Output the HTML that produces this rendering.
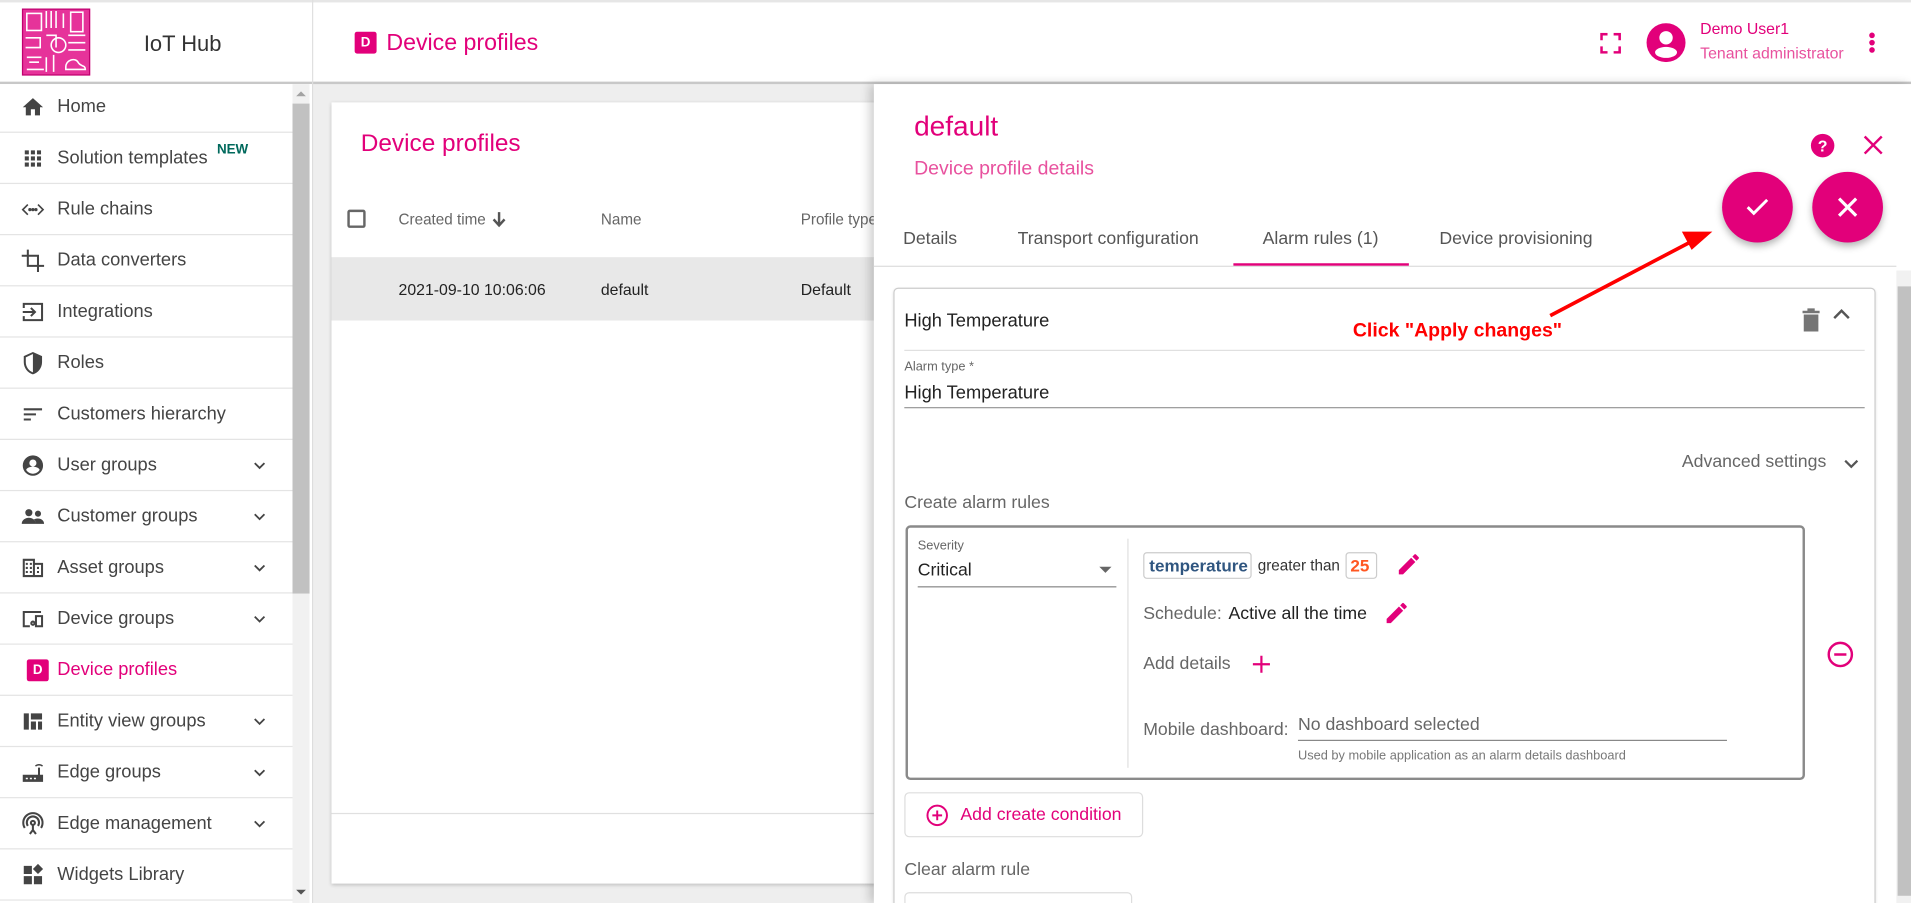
<!DOCTYPE html>
<html><head><meta charset="utf-8">
<style>
*{box-sizing:border-box;margin:0;padding:0}
html,body{width:1911px;height:903px;overflow:hidden;background:#fff;font-family:"Liberation Sans",Arial,sans-serif}
#w{width:1568px;height:741px;position:relative;transform:scale(1.21875);transform-origin:0 0;overflow:hidden}
.a{position:absolute}
.pk{color:#e2007a}
.side{left:0;top:67px;width:240px}
.it{position:relative;height:42px;border-bottom:1px solid #e4e4e4;display:flex;align-items:center;padding-left:47px;font-size:15px;color:#444}
.it svg{position:absolute;left:17px;top:11px;width:20px;height:20px;fill:#444}
.it svg.s{fill:none}
.it .ch{position:absolute;left:204px;top:12px;width:18px;height:18px;fill:#444}
.t{position:absolute;white-space:nowrap}
</style></head><body><div id="w">
<div class="a" style="left:0;top:0;width:1568px;height:2px;background:#e6e6e6"></div>
<div class="a" style="left:18px;top:7px;width:56px;height:55px;background:#e6339a;border:1px solid #c00070"></div>
<svg class="a" style="left:18px;top:7px" width="56" height="55" viewBox="0 0 56 55" fill="none" stroke="#fff" stroke-width="1.3"><rect x="4" y="4" width="12" height="14"/><path d="M20 2v14M24 2v14M28 2v14M34 4v12"/><rect x="40" y="3" width="10" height="16"/><path d="M3 24h12v8H3M20 22h8v10"/><circle cx="30" cy="30" r="6"/><path d="M38 22h14M38 28h14M38 34h14M4 40h12M6 44h8M20 40v12M26 38v14M4 50h14"/><path d="M36 48c0-6 8-8 10-4s6 2 6 6H36z"/></svg>
<div class="t" style="left:118px;top:26px;font-size:18px;color:#333">IoT Hub</div>
<div class="a" style="left:256px;top:0;width:1px;height:67px;background:#e0e0e0"></div>
<div class="a" style="left:291px;top:26px;width:18px;height:18px;background:#e2007a;border-radius:2px;color:#fff;font-size:11px;font-weight:bold;text-align:center;line-height:18px">D</div>
<div class="t pk" style="left:317px;top:25px;font-size:19px">Device profiles</div>
<svg class="a" style="left:1313px;top:27px" width="17" height="17" viewBox="0 0 17 17" fill="none" stroke="#e2007a" stroke-width="2.2"><path d="M1 6V1h5M11 1h5v5M16 11v5h-5M6 16H1v-5"/></svg>
<svg class="a" style="left:1351px;top:19px" width="32" height="32" viewBox="0 0 32 32"><circle cx="16" cy="16" r="16" fill="#e2007a"/><circle cx="16" cy="12" r="5.5" fill="#fff"/><ellipse cx="16" cy="24" rx="9" ry="4.5" fill="#fff"/></svg>
<div class="t pk" style="left:1395px;top:16px;font-size:13px">Demo User1</div>
<div class="t pk" style="left:1395px;top:36px;font-size:13px;color:#e8519e">Tenant administrator</div>
<svg class="a" style="left:1532px;top:25px" width="8" height="20"><circle cx="4" cy="4" r="2.3" fill="#e2007a"/><circle cx="4" cy="10" r="2.3" fill="#e2007a"/><circle cx="4" cy="16" r="2.3" fill="#e2007a"/></svg>
<div class="a" style="left:257px;top:67px;width:1311px;height:674px;background:#eee"></div>
<div class="a" style="left:0;top:67px;width:1568px;height:2px;background:#c8c8c8"></div>
<div class="a" style="left:0;top:69px;width:256px;height:672px;background:#fff"></div>
<div class="a" style="left:256px;top:67px;width:1px;height:674px;background:#ddd"></div>
<div class="a" style="left:240px;top:69px;width:14px;height:672px;background:#f1f1f1"></div>
<div class="a" style="left:240px;top:85px;width:14px;height:402px;background:#c1c1c1"></div>
<div class="a" style="left:243px;top:75px;width:0;height:0;border:4px solid transparent;border-bottom-color:#a3a3a3;border-top:0"></div>
<div class="a" style="left:243px;top:730px;width:0;height:0;border:4px solid transparent;border-top-color:#555;border-bottom:0"></div>
<div class="a side">
<div class="it"><svg viewBox="0 0 24 24"><path d="M10 20v-6h4v6h5v-8h3L12 3 2 12h3v8z"/></svg>Home</div>
<div class="it"><svg viewBox="0 0 24 24"><path d="M4 4h4v4H4zM10 4h4v4h-4zM16 4h4v4h-4zM4 10h4v4H4zM10 10h4v4h-4zM16 10h4v4h-4zM4 16h4v4H4zM10 16h4v4h-4zM16 16h4v4h-4z"/></svg>Solution templates<span style="position:absolute;left:178px;top:8px;font-size:11px;color:#00695c;font-weight:bold">NEW</span></div>
<div class="it"><svg class="s" viewBox="0 0 24 24" stroke="#444" stroke-width="1.6"><path d="M7 7l-5 5 5 5M17 7l5 5-5 5"/><circle cx="9" cy="12" r=".8" fill="#444"/><circle cx="12" cy="12" r=".8" fill="#444"/><circle cx="15" cy="12" r=".8" fill="#444"/></svg>Rule chains</div>
<div class="it"><svg class="s" viewBox="0 0 24 24" stroke="#444" stroke-width="2"><path d="M7 1v16h16M1 7h16v16"/></svg>Data converters</div>
<div class="it"><svg class="s" viewBox="0 0 24 24" stroke="#444" stroke-width="2"><path d="M3 8V4h18v16H3v-4M2 12h12M10 8l4 4-4 4"/></svg>Integrations</div>
<div class="it"><svg viewBox="0 0 24 24"><path d="M12 1L3 5v6c0 5.5 3.8 10.7 9 12 5.2-1.3 9-6.5 9-12V5zm0 2v18c-4-1.2-7-5.5-7-10V6.3z"/></svg>Roles</div>
<div class="it"><svg viewBox="0 0 24 24"><path d="M3 6h18v2H3zM3 11h12v2H3zM3 16h7v2H3z"/></svg>Customers hierarchy</div>
<div class="it"><svg viewBox="0 0 24 24"><path d="M12 2a10 10 0 100 20 10 10 0 000-20zm0 4a3.5 3.5 0 110 7 3.5 3.5 0 010-7zm0 14c-2.8 0-5.2-1.4-6.6-3.6 0-2.2 4.4-3.4 6.6-3.4s6.6 1.2 6.6 3.4C17.2 18.6 14.8 20 12 20z"/></svg>User groups<svg class="ch" viewBox="0 0 24 24"><path d="M7.4 8.6L12 13.2l4.6-4.6L18 10l-6 6-6-6z"/></svg></div>
<div class="it"><svg viewBox="0 0 24 24"><circle cx="8" cy="8" r="3.5"/><circle cx="17" cy="9" r="3"/><path d="M1 19c0-4 4-6 7-6s7 2 7 6zM15 19c0-2-1-3.5-2-4.5 1-.5 2.6-.8 4-.8 2.5 0 6 1.5 6 5.3z"/></svg>Customer groups<svg class="ch" viewBox="0 0 24 24"><path d="M7.4 8.6L12 13.2l4.6-4.6L18 10l-6 6-6-6z"/></svg></div>
<div class="it"><svg viewBox="0 0 24 24"><path d="M2 3h12v4h8v14H2zm2 2v14h8V5zm10 4v10h6V9zM5 7h2v2H5zm4 0h2v2H9zM5 11h2v2H5zm4 0h2v2H9zM5 15h2v2H5zm4 0h2v2H9zm7-4h2v2h-2zm0 4h2v2h-2z"/></svg>Asset groups<svg class="ch" viewBox="0 0 24 24"><path d="M7.4 8.6L12 13.2l4.6-4.6L18 10l-6 6-6-6z"/></svg></div>
<div class="it"><svg class="s" viewBox="0 0 24 24" stroke="#444" stroke-width="2"><path d="M20 5H3v14h6M15 9h6v10h-6z"/><circle cx="12" cy="16" r="1.6"/></svg>Device groups<svg class="ch" viewBox="0 0 24 24"><path d="M7.4 8.6L12 13.2l4.6-4.6L18 10l-6 6-6-6z"/></svg></div>
<div class="it" style="color:#e2007a"><span style="position:absolute;left:22px;top:12px;width:18px;height:18px;background:#e2007a;border-radius:2px;color:#fff;font-size:11px;font-weight:bold;text-align:center;line-height:18px">D</span>Device profiles</div>
<div class="it"><svg viewBox="0 0 24 24"><path d="M3 4h5v16H3zM10 4h11v6H10zM10 12h5v8h-5zM17 12h4v8h-4z"/></svg>Entity view groups<svg class="ch" viewBox="0 0 24 24"><path d="M7.4 8.6L12 13.2l4.6-4.6L18 10l-6 6-6-6z"/></svg></div>
<div class="it"><svg viewBox="0 0 24 24"><path d="M2 14h20v7H2zm3 3v1.5h2V17zm4 0v1.5h2V17zm4 0v1.5h2V17zM17 7h2v7h-2zM14 5c2.5-2 5.5-2 8 0l-1 1c-2-1.5-4-1.5-6 0z"/></svg>Edge groups<svg class="ch" viewBox="0 0 24 24"><path d="M7.4 8.6L12 13.2l4.6-4.6L18 10l-6 6-6-6z"/></svg></div>
<div class="it"><svg class="s" viewBox="0 0 24 24" stroke="#444" stroke-width="2"><circle cx="12" cy="11" r="2"/><path d="M12 13v5l-3 4M12 18l3 4M7 14a6 6 0 1110 0M4 16a9.5 9.5 0 1116 0"/></svg>Edge management<svg class="ch" viewBox="0 0 24 24"><path d="M7.4 8.6L12 13.2l4.6-4.6L18 10l-6 6-6-6z"/></svg></div>
<div class="it"><svg viewBox="0 0 24 24"><path d="M3 3h8v8H3zM13 13h8v8h-8zM3 13h8v8H3zM17 1l5 5-5 5-5-5z"/></svg>Widgets Library</div>
</div>
<div class="a" style="left:272px;top:84px;width:460px;height:641px;background:#fff;box-shadow:0 1px 3px rgba(0,0,0,.2)"></div>
<div class="t pk" style="left:296px;top:107px;font-size:20px">Device profiles</div>
<div class="a" style="left:285px;top:172px;width:15px;height:15px;border:2px solid #666;border-radius:2px"></div>
<div class="t" style="left:327px;top:173px;font-size:12.5px;color:#666">Created time</div>
<svg class="a" style="left:403px;top:173px" width="13" height="14" viewBox="0 0 13 14"><path d="M6.5 1v10M2 7l4.5 5L11 7" stroke="#555" stroke-width="2" fill="none"/></svg>
<div class="t" style="left:493px;top:173px;font-size:12.5px;color:#666">Name</div>
<div class="t" style="left:657px;top:173px;font-size:12.5px;color:#666">Profile type</div>
<div class="a" style="left:272px;top:211px;width:460px;height:52px;background:#e8e8e8"></div>
<div class="t" style="left:327px;top:230px;font-size:13px;color:#222">2021-09-10 10:06:06</div>
<div class="t" style="left:493px;top:230px;font-size:13px;color:#222">default</div>
<div class="t" style="left:657px;top:230px;font-size:13px;color:#222">Default</div>
<div class="a" style="left:272px;top:667px;width:460px;height:1px;background:#e0e0e0"></div>
<div class="a" style="left:717px;top:69px;width:851px;height:672px;background:#fff;box-shadow:-3px 0 8px rgba(0,0,0,.2)"></div>
<div class="a" style="left:1556px;top:222px;width:12px;height:519px;background:#f1f1f1"></div>
<div class="a" style="left:1557px;top:235px;width:11px;height:500px;background:#c1c1c1"></div>
<div class="t pk" style="left:750px;top:90px;font-size:23px">default</div>
<div class="t pk" style="left:750px;top:130px;font-size:16px;color:#e8519e">Device profile details</div>
<svg class="a" style="left:1485px;top:109px" width="21" height="21" viewBox="0 0 24 24"><circle cx="12" cy="12" r="11" fill="#e2007a"/><text x="12" y="17.5" text-anchor="middle" font-family="Liberation Sans" font-weight="bold" font-size="15" fill="#fff">?</text></svg>
<svg class="a" style="left:1529px;top:111px" width="16" height="16" viewBox="0 0 16 16"><path d="M1 1l14 14M15 1L1 15" stroke="#e2007a" stroke-width="2"/></svg>
<div class="a" style="left:1413px;top:141px;width:58px;height:58px;border-radius:50%;background:#e2007a;box-shadow:0 3px 6px rgba(0,0,0,.3)"></div>
<svg class="a" style="left:1432px;top:161px" width="20" height="17" viewBox="0 0 20 17"><path d="M2 9l5 5L18 3" stroke="#fff" stroke-width="2.4" fill="none"/></svg>
<div class="a" style="left:1487px;top:141px;width:58px;height:58px;border-radius:50%;background:#e2007a;box-shadow:0 3px 6px rgba(0,0,0,.3)"></div>
<svg class="a" style="left:1508px;top:162px" width="16" height="16" viewBox="0 0 16 16"><path d="M1 1l14 14M15 1L1 15" stroke="#fff" stroke-width="2.6"/></svg>
<div class="t" style="left:741px;top:188px;font-size:14.5px;color:#555">Details</div>
<div class="t" style="left:835px;top:188px;font-size:14.5px;color:#555">Transport configuration</div>
<div class="t" style="left:1036px;top:188px;font-size:14.5px;color:#555">Alarm rules (1)</div>
<div class="t" style="left:1181px;top:188px;font-size:14.5px;color:#555">Device provisioning</div>
<div class="a" style="left:717px;top:218px;width:839px;height:1px;background:#ddd"></div>
<div class="a" style="left:1012px;top:216px;width:144px;height:2px;background:#e2007a"></div>
<div class="a" style="left:733px;top:236px;width:806px;height:520px;border:1px solid #ccc;border-radius:4px;box-shadow:0 1px 2px rgba(0,0,0,.1)"></div>
<div class="t" style="left:742px;top:255px;font-size:15px;color:#222">High Temperature</div>
<svg class="a" style="left:1478px;top:252px" width="16" height="20" viewBox="0 0 16 20"><path d="M1 3h14v2H1zM5 1h6v2H5zM2 6h12v14H2z" fill="#757575"/></svg>
<svg class="a" style="left:1502px;top:251px" width="18" height="14" viewBox="0 0 18 14"><path d="M3 10l6-6 6 6" stroke="#555" stroke-width="2" fill="none"/></svg>
<div class="a" style="left:742px;top:287px;width:788px;height:1px;background:#e0e0e0"></div>
<div class="t" style="left:742px;top:295px;font-size:10.5px;color:#666">Alarm type *</div>
<div class="t" style="left:742px;top:314px;font-size:15px;color:#222">High Temperature</div>
<div class="a" style="left:742px;top:334px;width:788px;height:1px;background:#999"></div>
<div class="t" style="left:1380px;top:371px;font-size:14.5px;color:#666">Advanced settings</div>
<svg class="a" style="left:1511px;top:375px" width="16" height="12" viewBox="0 0 16 12"><path d="M3 3l5 5 5-5" stroke="#555" stroke-width="1.8" fill="none"/></svg>
<div class="t" style="left:742px;top:405px;font-size:14.5px;color:#666">Create alarm rules</div>
<div class="a" style="left:743px;top:431px;width:738px;height:209px;border:2px solid #8a8a8a;border-radius:4px"></div>
<div class="t" style="left:753px;top:442px;font-size:10.5px;color:#666">Severity</div>
<div class="t" style="left:753px;top:460px;font-size:14.5px;color:#222">Critical</div>
<div class="a" style="left:902px;top:465px;border:5px solid transparent;border-top-color:#666;border-bottom:0"></div>
<div class="a" style="left:753px;top:481px;width:163px;height:1px;background:#888"></div>
<div class="a" style="left:925px;top:442px;width:1px;height:188px;background:#e0e0e0"></div>
<div class="a" style="left:938px;top:453px;width:89px;height:22px;border:1px solid #ccc;border-radius:3px"></div>
<div class="t" style="left:943px;top:456px;font-size:14px;font-weight:bold;color:#305680">temperature</div>
<div class="t" style="left:1032px;top:457px;font-size:12.5px;color:#333">greater than</div>
<div class="a" style="left:1104px;top:453px;width:26px;height:22px;border:1px solid #ccc;border-radius:3px"></div>
<div class="t" style="left:1108px;top:456px;font-size:14px;font-weight:bold;color:#ff5722">25</div>
<svg class="a" style="left:1145px;top:452px" width="22" height="22" viewBox="0 0 24 24"><path d="M3 17.25V21h3.75L17.8 9.94l-3.75-3.75zM20.7 7.04a1 1 0 000-1.41l-2.34-2.34a1 1 0 00-1.41 0l-1.83 1.83 3.75 3.75z" fill="#e2007a"/></svg>
<div class="t" style="left:938px;top:496px;font-size:14.5px;color:#666">Schedule:</div>
<div class="t" style="left:1008px;top:496px;font-size:14.5px;color:#222">Active all the time</div>
<svg class="a" style="left:1135px;top:492px" width="22" height="22" viewBox="0 0 24 24"><path d="M3 17.25V21h3.75L17.8 9.94l-3.75-3.75zM20.7 7.04a1 1 0 000-1.41l-2.34-2.34a1 1 0 00-1.41 0l-1.83 1.83 3.75 3.75z" fill="#e2007a"/></svg>
<div class="t" style="left:938px;top:537px;font-size:14.5px;color:#666">Add details</div>
<svg class="a" style="left:1027px;top:537px" width="16" height="16" viewBox="0 0 16 16"><path d="M8 1v14M1 8h14" stroke="#e2007a" stroke-width="1.8"/></svg>
<div class="t" style="left:938px;top:591px;font-size:14.5px;color:#666">Mobile dashboard:</div>
<div class="t" style="left:1065px;top:587px;font-size:14.5px;color:#666">No dashboard selected</div>
<div class="a" style="left:1065px;top:607px;width:352px;height:1px;background:#888"></div>
<div class="t" style="left:1065px;top:614px;font-size:10.5px;color:#777">Used by mobile application as an alarm details dashboard</div>
<svg class="a" style="left:1499px;top:526px" width="22" height="22" viewBox="0 0 22 22"><circle cx="11" cy="11" r="9.5" stroke="#e2007a" stroke-width="2" fill="none"/><path d="M6 11h10" stroke="#e2007a" stroke-width="2"/></svg>
<div class="a" style="left:742px;top:650px;width:196px;height:37px;border:1px solid #ddd;border-radius:4px"></div>
<svg class="a" style="left:760px;top:660px" width="18" height="18" viewBox="0 0 18 18"><circle cx="9" cy="9" r="8" stroke="#e2007a" stroke-width="1.6" fill="none"/><path d="M9 5v8M5 9h8" stroke="#e2007a" stroke-width="1.6"/></svg>
<div class="t pk" style="left:788px;top:661px;font-size:14.5px">Add create condition</div>
<div class="t" style="left:742px;top:706px;font-size:14.5px;color:#666">Clear alarm rule</div>
<div class="a" style="left:742px;top:732px;width:187px;height:30px;border:1px solid #ddd;border-radius:4px"></div>
<svg class="a" style="left:0;top:0" width="1568" height="741"><path d="M1272 259L1390 197" stroke="#f00" stroke-width="3"/><path d="M1405 190l-25 0 8 15z" fill="#f00"/></svg>
<div class="t" style="left:1110px;top:263px;font-size:16px;font-weight:bold;color:#f00">Click "Apply changes"</div>
</div></body></html>
